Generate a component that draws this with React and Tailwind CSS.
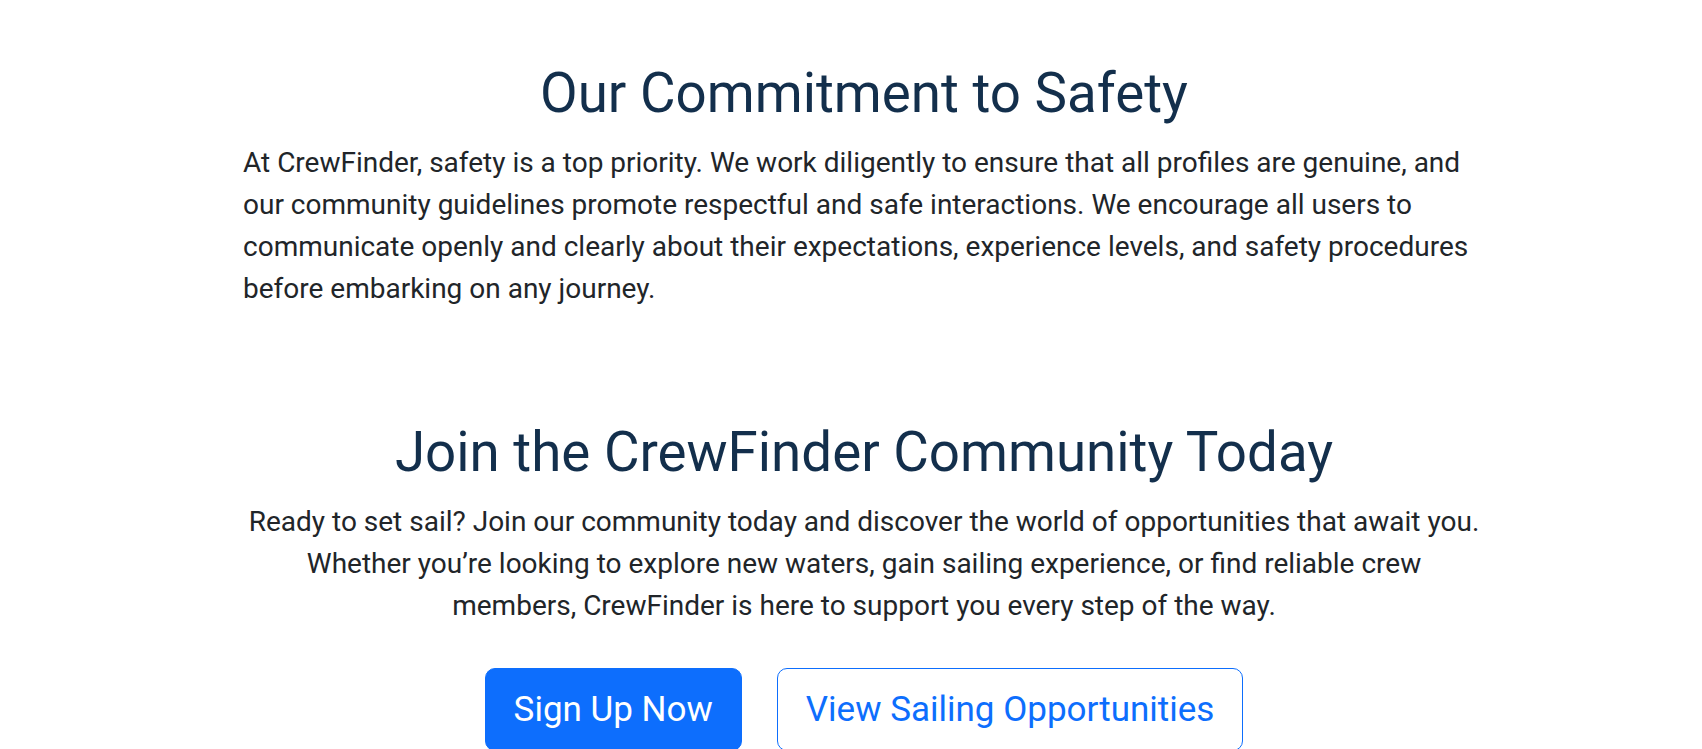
import React from "react";

export default function App() {
  return (
    <div className="min-h-[749px] bg-white pl-[26px] font-['Roboto',_'Liberation_Sans',_sans-serif]">
      <div className="mx-auto w-[1242px]">
        <section className="pt-[61px]">
          <h2 className="text-center text-[54.7px] font-normal leading-[1.2] text-[#132f4c]">
            Our Commitment to Safety
          </h2>
          <p className="mt-[15px] text-[28px] leading-[42px] text-[#212529]">
            At CrewFinder, safety is a top priority. We work diligently to ensure that all profiles are genuine, and our community guidelines promote respectful and safe interactions. We encourage all users to communicate openly and clearly about their expectations, experience levels, and safety procedures before embarking on any journey.
          </p>
        </section>
        <section className="mt-[110px]">
          <h2 className="text-center text-[54.7px] font-normal leading-[1.2] text-[#132f4c]">
            Join the CrewFinder Community Today
          </h2>
          <p className="mt-[16px] text-center text-[28px] leading-[42px] text-[#212529]">
            Ready to set sail? Join our community today and discover the world of opportunities that await you. Whether you’re looking to explore new waters, gain sailing experience, or find reliable crew
            <br />
            members, CrewFinder is here to support you every step of the way.
          </p>
          <div className="mt-[41px] flex justify-center gap-[35px]">
            <a
              href="#"
              className="rounded-[10px] border border-[#0d6efd] bg-[#0d6efd] px-[28px] pb-[13px] pt-[15px] text-[35px] leading-[52.5px] text-white"
            >
              Sign Up Now
            </a>
            <a
              href="#"
              className="rounded-[10px] border border-[#0d6efd] bg-white px-[28px] pb-[13px] pt-[15px] text-[35px] leading-[52.5px] text-[#0d6efd]"
            >
              View Sailing Opportunities
            </a>
          </div>
        </section>
      </div>
    </div>
  );
}
